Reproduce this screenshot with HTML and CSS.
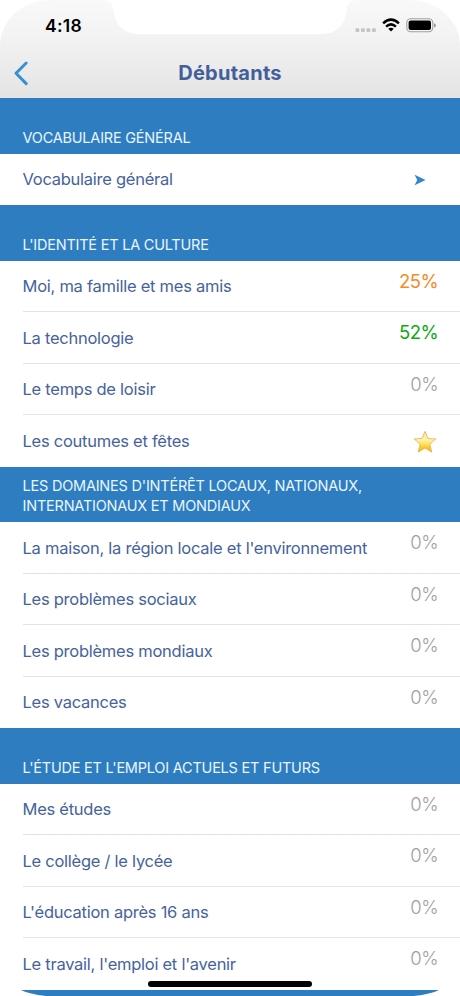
FILE: index.html
```html
<!DOCTYPE html>
<html lang="fr">
<head>
<meta charset="utf-8">
<title>Débutants</title>
<link rel="stylesheet" href="styles.css">
</head>
<body>
<div class="phone">
  <header class="top">
    <svg class="notch" width="252" height="34" viewBox="0 0 252 34"><path fill="#fff" d="M0 0H252Q244 1 243 8C242 24 233 34 217 34H35C19 34 10 24 9 8Q8 1 0 0Z"/></svg>
    <div class="status">
      <span class="time">4:18</span>
      <svg width="84" height="18" viewBox="0 0 84 18">
        <g fill="#c4c4c5"><rect x="1.5" y="10.2" width="3.8" height="3.8" rx="1"/><rect x="7" y="10.2" width="3.8" height="3.8" rx="1"/><rect x="12.5" y="10.2" width="3.8" height="3.8" rx="1"/><rect x="18" y="10.2" width="3.8" height="3.8" rx="1"/></g>
        <g fill="none" stroke="#000" stroke-width="2.5"><path d="M29.1 5.3Q37 -2 44.9 5.3"/><path d="M32.1 8.6Q37 4.2 41.9 8.6"/></g>
        <path d="M34.3 10.7Q37 8.6 39.7 10.7L37 13.6Z"/>
        <rect x="52.8" y=".8" width="26" height="13" rx="4" fill="none" stroke="#a0a0a0" stroke-width="1.1"/>
        <rect x="54.6" y="2.6" width="22.4" height="9.4" rx="2"/>
        <path fill="#999" d="M80 5.2Q82 5.8 82 7.4T80 9.5Z"/>
      </svg>
    </div>
    <div class="nav">
      <svg class="back" width="16" height="26" viewBox="0 0 16 26"><path d="M13.2 3 3 13.3 13.2 23.6" fill="none" stroke="#3791cc" stroke-width="3" stroke-linecap="round" stroke-linejoin="round"/></svg>
      <h1>Débutants</h1>
    </div>
  </header>
  <main>
    <h2>VOCABULAIRE GÉNÉRAL</h2>
    <ul>
      <li><span class="name">Vocabulaire général</span><svg class="arrow" width="12" height="12" viewBox="0 0 12 12"><path fill="#3387cf" d="M.6 .8 11.6 6 .6 11.2 3.2 6Z"/></svg></li>
    </ul>
    <h2>L'IDENTITÉ ET LA CULTURE</h2>
    <ul>
      <li><span class="name">Moi, ma famille et mes amis</span><span class="score mid">25%</span></li>
      <li><span class="name">La technologie</span><span class="score good">52%</span></li>
      <li><span class="name">Le temps de loisir</span><span class="score">0%</span></li>
      <li><span class="name">Les coutumes et fêtes</span>
        <svg class="star" width="24" height="24" viewBox="0 0 24 24"><defs><linearGradient id="gold" x1="0" y1="0" x2="0" y2="1"><stop offset="0" stop-color="#fbe08a"/><stop offset=".4" stop-color="#fff3b0"/><stop offset=".6" stop-color="#fde468"/><stop offset=".75" stop-color="#fbcb28"/><stop offset="1" stop-color="#f8ba12"/></linearGradient></defs><path fill="url(#gold)" stroke="#e3ae55" stroke-width=".8" stroke-linejoin="round" d="M12 1.3 14.9 8.4 22.8 9 16.8 14.1 18.8 22.2 12 18 5.2 22.2 7.2 14.1 1.2 9 9.1 8.4Z"/></svg></li>
    </ul>
    <h2>LES DOMAINES D'INTÉRÊT LOCAUX, NATIONAUX,<br>INTERNATIONAUX ET MONDIAUX</h2>
    <ul>
      <li><span class="name">La maison, la région locale et l'environnement</span><span class="score">0%</span></li>
      <li><span class="name">Les problèmes sociaux</span><span class="score">0%</span></li>
      <li><span class="name">Les problèmes mondiaux</span><span class="score">0%</span></li>
      <li><span class="name">Les vacances</span><span class="score">0%</span></li>
    </ul>
    <h2>L'ÉTUDE ET L'EMPLOI ACTUELS ET FUTURS</h2>
    <ul>
      <li><span class="name">Mes études</span><span class="score">0%</span></li>
      <li><span class="name">Le collège / le lycée</span><span class="score">0%</span></li>
      <li><span class="name">L'éducation après 16 ans</span><span class="score">0%</span></li>
      <li><span class="name">Le travail, l'emploi et l'avenir</span><span class="score">0%</span></li>
    </ul>
  </main>
  <svg class="foot" width="460" height="7" viewBox="0 0 460 7"><path fill="#2f7dc1" d="M21 0H439Q428 5.5 402 7H58Q32 5.5 21 0Z"/></svg>
  <div class="home"></div>
</div>
</body>
</html>
```

FILE: styles.css
```css
* { box-sizing: border-box; }
body {
  margin: 0;
  background: #fff;
  font-family: Inter, "Liberation Sans", sans-serif;
}
.phone {
  position: relative;
  width: 460px;
  height: 996px;
  overflow: hidden;
  background: #fff;
}
.top {
  position: relative;
  height: 98px;
  border-radius: 50px 50px 0 0 / 46px 46px 0 0;
  background: linear-gradient(#f9f9fa, #f3f3f3 35%, #e4e4e4);
}
.notch { position: absolute; left: 104px; top: 0; }
.status {
  display: flex;
  justify-content: space-between;
  height: 48px;
  padding: 18px 22px 0 45px;
}
.time {
  font-size: 17.5px;
  line-height: 16px;
  font-weight: 600;
  letter-spacing: .3px;
  color: #000;
}
.nav {
  display: grid;
  grid-template-columns: 32px 1fr 32px;
  align-items: center;
  height: 50px;
}
.back { margin-left: 13px; }
h1 {
  margin: 0;
  text-align: center;
  font-size: 20px;
  line-height: 24px;
  font-weight: 700;
  letter-spacing: .25px;
  color: #41609b;
}
h2 {
  display: flex;
  align-items: flex-end;
  height: 55.6px;
  margin: 0;
  padding: 0 22.5px 6px;
  background: #2f7dc1;
  color: #e9f6ff;
  font-size: 14.5px;
  line-height: 20px;
  font-weight: 400;
  letter-spacing: -.22px;
}
ul { margin: 0; padding: 0; list-style: none; }
li {
  display: flex;
  justify-content: space-between;
  height: 51.5px;
  padding: 0 22px 0 0;
  margin-left: 22.5px;
  border-bottom: 1px solid #e3e3e5;
}
li:last-child { border-bottom: 0; }
.name {
  padding-top: .35px;
  font-size: 16.5px;
  line-height: 51px;
  letter-spacing: -.26px;
  color: #46639c;
  white-space: nowrap;
}
.score {
  font-size: 18.5px;
  line-height: 41px;
  font-weight: 300;
  letter-spacing: -.55px;
  color: #a0a0a0;
}
.mid { color: #f78b1f; font-weight: 400; }
.good { color: #0eaa14; font-weight: 400; }
.arrow { margin: 20px 12px 0 0; }
.star { margin: 14.5px 1.5px 0 0; }
.foot { display: block; }
.home {
  position: absolute;
  left: 148px;
  top: 981px;
  width: 164px;
  height: 6px;
  border-radius: 3px;
  background: #000;
}
```
